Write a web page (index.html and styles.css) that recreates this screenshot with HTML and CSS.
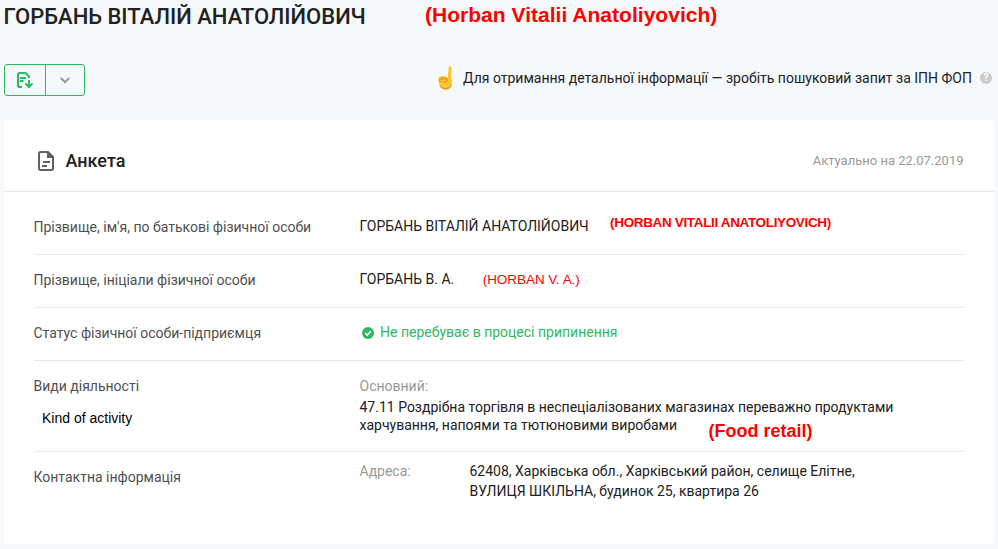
FILE: index.html
```html
<!DOCTYPE html>
<html lang="uk">
<head>
<meta charset="utf-8">
<title>ГОРБАНЬ ВІТАЛІЙ АНАТОЛІЙОВИЧ</title>
<link rel="stylesheet" href="styles.css">
</head>
<body>
<header class="page-head">
  <h1 class="title">ГОРБАНЬ ВІТАЛІЙ АНАТОЛІЙОВИЧ</h1>
  <span class="note note-title">(Horban Vitalii Anatoliyovich)</span>
</header>
<div class="toolbar">
  <div class="actions">
    <button class="btn btn-save" aria-label="Зберегти">
      <svg width="18" height="18" viewBox="0 0 18 18" fill="none" stroke="#2fb862" stroke-width="2"><path d="M6 16H3.500A1.500 1.500 0 0 1 2 14.500V3.500A1.500 1.500 0 0 1 3.500 2h6L13 5.500V7M4 7h6M4 10h3.500M13 9v7M9.500 12.500 13 16l3.500-3.500"/></svg>
    </button>
    <button class="btn btn-more" aria-label="Більше">
      <svg width="10" height="7" viewBox="0 0 10 7" fill="none" stroke="#999" stroke-width="2"><path d="M.8 1 5 5.200 9.200 1"/></svg>
    </button>
  </div>
  <div class="hint">
    <svg class="hand" width="18" height="26" viewBox="0 0 18 26">
      <path d="M11.500 3.200Q11.500 1.300 13 1.300t1.600 1.900L14.300 13q1.400 2 .9 5.200l-1 3.300Q12.300 24.600 8.800 24.600 4.400 24.600 2.600 20.500L1.300 15q-.4-2.700 1.500-3.200 1.600-1.200 3-.3 1.700-1.400 3.200.3l1.800.6z" fill="#fcc432"/>
      <path d="M2 15.500q1 1.800 3 .4 2 1.300 3.600-.3l1 1M5.400 12l.2 2.500M8.800 12.200l-.1 2.200M2.800 20.300q2.300 3.900 6.500 3.600 3.600-.4 4.800-3.600" fill="none" stroke="#e29a1c" stroke-width="1.100"/>
      <path d="M2.500 14.500 8 13.600q3 .2 2.500 2.200-1 1.700-3.500 1.500" fill="#fcc432" stroke="#c98720" stroke-width=".8"/>
    </svg>
    <span class="hint-text">Для отримання детальної інформації — зробіть пошуковий запит за ІПН ФОП</span>
    <span class="help">?</span>
  </div>
</div>
<main class="card">
  <div class="card-head">
    <svg width="16" height="20" viewBox="0 0 16 20"><path d="M2.500 1H10l5 5v11.500a1.500 1.500 0 0 1-1.500 1.500h-11A1.500 1.500 0 0 1 1 17.500v-15A1.500 1.500 0 0 1 2.500 1z" fill="none" stroke="#606060" stroke-width="2"/><path d="M9 1h1.500L15.500 6v1H9z" fill="#606060"/><path d="M5 11h7M4 15h5" stroke="#606060" stroke-width="2"/></svg>
    <h2 class="card-title">Анкета</h2>
    <span class="date">Актуально на 22.07.2019</span>
  </div>
  <div class="rows">
    <section class="row row-first">
      <div class="label">Прізвище, ім'я, по батькові фізичної особи</div>
      <div class="value">ГОРБАНЬ ВІТАЛІЙ АНАТОЛІЙОВИЧ</div>
      <span class="note note-name">(HORBAN VITALII ANATOLIYOVICH)</span>
    </section>
    <section class="row">
      <div class="label">Прізвище, ініціали фізичної особи</div>
      <div class="value">ГОРБАНЬ В. А.</div>
      <span class="note note-initials">(HORBAN V. A.)</span>
    </section>
    <section class="row">
      <div class="label">Статус фізичної особи-підприємця</div>
      <div class="value status">
        <svg width="12" height="12" viewBox="0 0 12 12"><circle cx="6" cy="6" r="6" fill="#2fb862"/><path d="m3.200 6.200 2 1.900 3.700-3.900" fill="none" stroke="#fff" stroke-width="1.600"/></svg>
        <span>Не перебуває в процесі припинення</span>
      </div>
    </section>
    <section class="row row-activity">
      <div class="label">Види діяльності<div class="note-kind">Kind of activity</div></div>
      <div class="value activity">
        <div class="muted">Основний:</div>
        <div class="code">47.11 Роздрібна торгівля в неспеціалізованих магазинах переважно продуктами<br>харчування, напоями та тютюновими виробами</div>
        <span class="note note-food">(Food retail)</span>
      </div>
    </section>
    <section class="row row-contact">
      <div class="label">Контактна інформація</div>
      <div class="value address">
        <div class="muted address-label">Адреса:</div>
        <div class="address-text">62408, Харківська обл., Харківський район, селище Елітне,<br>ВУЛИЦЯ ШКІЛЬНА, будинок 25, квартира 26</div>
      </div>
    </section>
  </div>
</main>
</body>
</html>
```
FILE: styles.css
```css
* { box-sizing: border-box; }
body {
  margin: 0;
  height: 549px;
  padding: 0 4px;
  overflow: hidden;
  background: #f5f9fc;
  color: #212121;
  font: 14px/20px Roboto, "Liberation Sans", sans-serif;
  white-space: nowrap;
}
h1, h2 { margin: 0; }
svg { display: block; flex: none; }
.page-head { display: flex; height: 64px; align-items: flex-start; }
.title { width: 421px; padding-top: 3px; font-size: 22px; line-height: 28px; font-weight: 500; text-indent: -0.5px; }
.note { color: #f00; font-family: "Liberation Sans", sans-serif; font-weight: 700; }
.note-title { padding-top: 3px; font-size: 21px; line-height: 24px; letter-spacing: 0.02px; }
.toolbar { display: flex; justify-content: space-between; height: 56px; align-items: flex-start; }
.actions { display: flex; width: 81px; height: 32px; border: 1px solid #2fb862; border-radius: 3px; }
.btn { display: flex; align-items: center; justify-content: center; padding: 0; border: 0; background: none; }
.btn-save { width: 41px; border-right: 1px solid #2fb862; }
.btn-more { width: 38px; }
.hint { display: flex; align-items: center; height: 28px; padding-right: 2px; }
.hand { margin-right: 8px; }
.hint-text { width: 509px; }
.help { width: 12px; height: 12px; margin-left: 8px; border-radius: 50%; background: #ccc; color: #fff; font-size: 10px; line-height: 12px; font-weight: 700; text-align: center; }
.card { width: 990px; height: 424px; border-radius: 3px; background: #fff; }
.card-head { display: flex; align-items: center; height: 72px; padding: 10px 30.5px 0 34px; border-bottom: 1px solid #e8e8e8; }
.card-title { margin-left: 11.5px; font-size: 18px; line-height: 24px; font-weight: 500; }
.date { margin-left: auto; color: #999; font-size: 13px; }
.rows { padding: 0 30px 0 29.5px; }
.row { display: flex; height: 53px; padding-top: 15px; border-bottom: 1px solid #e8e8e8; }
.row-first { height: 63px; padding-top: 25px; }
.row-activity { height: 91px; }
.row-contact { height: 92px; border-bottom: 0; }
.label { width: 326px; color: #505050; }
.value { margin-top: -1px; }
.note-name { margin: -4px 0 0 21.500px; font-size: 13.5px; letter-spacing: -0.35px; }
.note-initials { margin: 0 0 0 28.500px; font-size: 13.500px; font-weight: 400; letter-spacing: -0.05px; }
.status { display: flex; color: #2fb862; }
.status svg { margin: 5px 6px 0 2.5px; }
.note-kind { margin: 12px 0 0 8.500px; color: #000; font: 14px/20px "Liberation Sans", sans-serif; }
.activity { position: relative; margin-top: 0; }
.muted { color: #999; }
.code { margin-top: 2px; line-height: 18px; }
.note-food { position: absolute; left: 349px; top: 45px; font-size: 18px; }
.address { display: flex; margin-top: -6px; }
.address-label { width: 110px; }
```
